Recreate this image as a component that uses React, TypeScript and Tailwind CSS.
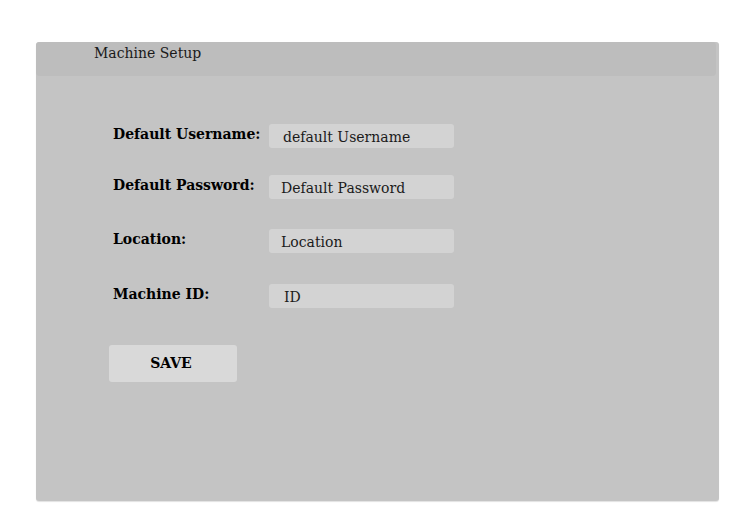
import React from 'react'

const FIELDS = [
  { label: 'Default Username:', placeholder: 'default Username', mt: 'mt-[48px]', pad: 'pl-[14px]' },
  { label: 'Default Password:', placeholder: 'Default Password', mt: 'mt-[27px]', pad: 'pl-[12px]' },
  { label: 'Location:', placeholder: 'Location', mt: 'mt-[30px]', pad: 'pl-[12px]' },
  { label: 'Machine ID:', placeholder: 'ID', mt: 'mt-[31px]', pad: 'pl-[15px]' },
]

export default function App() {
  return (
    <div className="min-h-[525px] w-[745px] bg-white pt-[42px] pl-[36px] font-['DejaVu_Serif',serif] text-black">
      <div className="h-[459px] w-[683px] rounded-[3px] bg-[#c4c4c4] shadow-[0_1px_1px_rgba(0,0,0,0.12)]">
        {/* header */}
        <div className="h-[34px] w-[680px] rounded-[4px] bg-[#bdbdbd] pl-[58px] pt-px text-[14px] leading-[20px] text-[#1a1a1a]">
          Machine Setup
        </div>

        <form className="pl-[77px]" onSubmit={e => e.preventDefault()}>
          {FIELDS.map(f => (
            <div key={f.label} className={`flex items-start ${f.mt}`}>
              <label className="w-[156px] shrink-0 pt-px text-[14px] font-bold leading-[18px]">{f.label}</label>
              <input
                placeholder={f.placeholder}
                className={`h-[24px] w-[185px] rounded-[3px] bg-[#d3d3d3] pr-2 pt-px text-[14px] outline-none placeholder:text-[#1a1a1a] ${f.pad}`}
              />
            </div>
          ))}
          <button
            type="submit"
            className="ml-[-4px] mt-[37px] h-[37px] w-[128px] rounded-[3px] bg-[#d9d9d9] pr-[4px] text-[14px] font-bold"
          >
            SAVE
          </button>
        </form>
      </div>
    </div>
  )
}
